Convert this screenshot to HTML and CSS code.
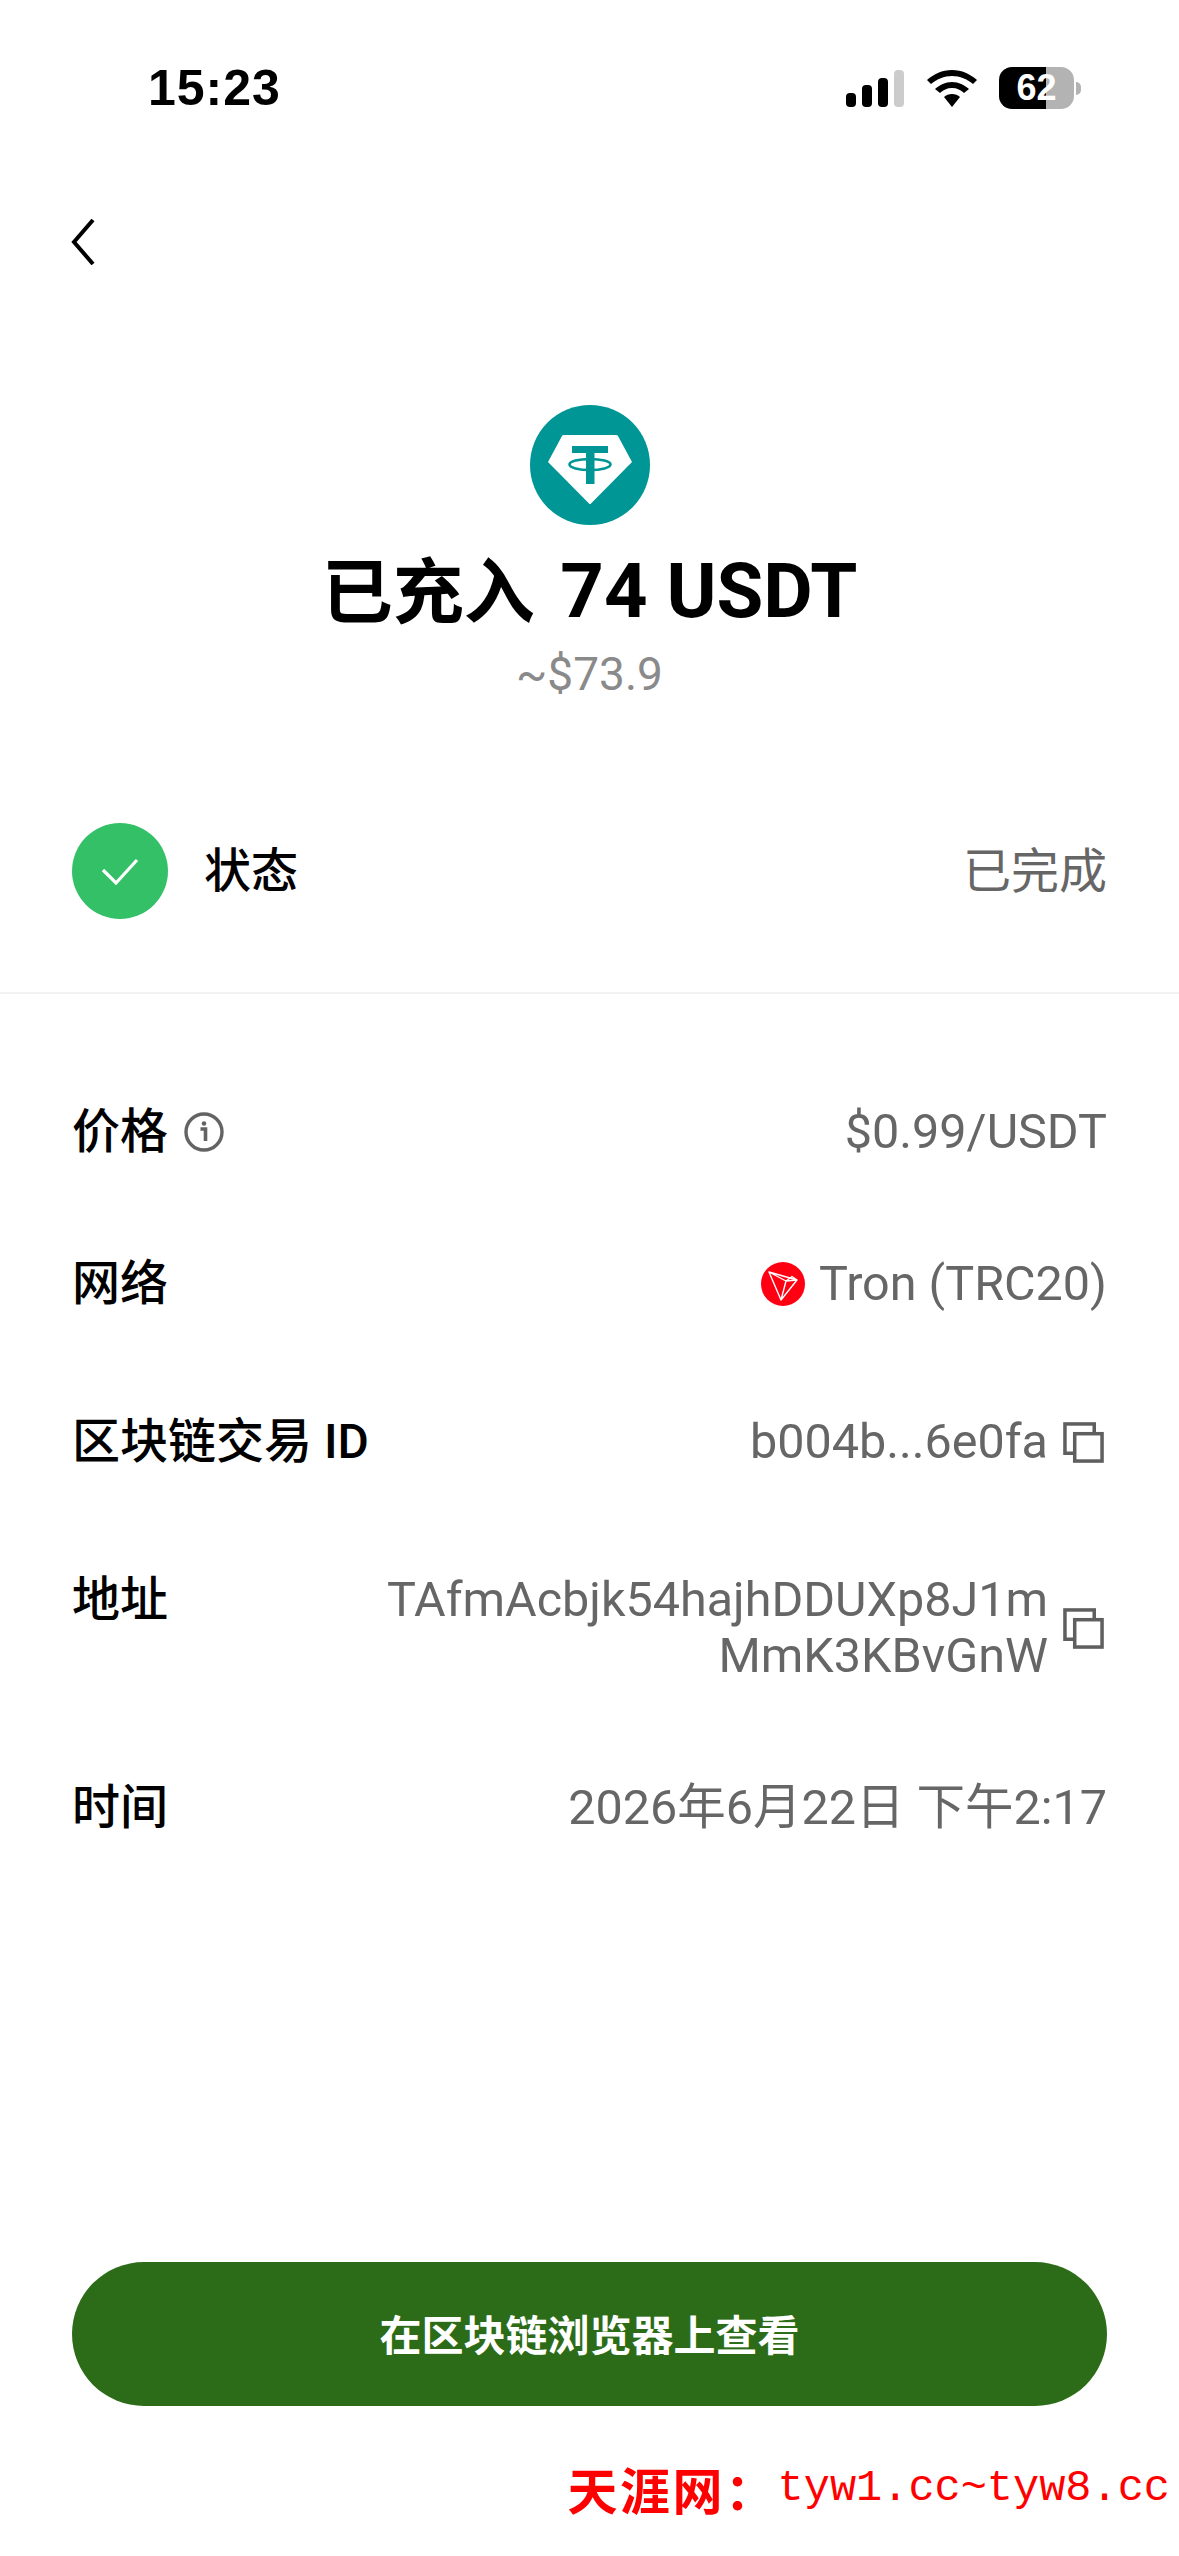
FILE: index.html
```html
<!DOCTYPE html>
<html lang="zh-CN">
<head>
    <meta charset="UTF-8">
    <meta name="viewport" content="width=device-width, initial-scale=1.0">
    <title>已充入 74 USDT</title>
    <link rel="stylesheet" href="styles.css">
</head>
<body>
    <div class="page">
        <div class="status-bar">
            <span class="clock">15:23</span>
            <div class="status-icons">
                <svg class="signal" width="58" height="37" viewBox="0 0 58 37">
                    <rect x="0" y="23" width="10" height="14" rx="4" fill="#000"/>
                    <rect x="16" y="15" width="10" height="22" rx="4" fill="#000"/>
                    <rect x="32" y="8" width="10" height="29" rx="4" fill="#000"/>
                    <rect x="48" y="0" width="10" height="37" rx="4" fill="#ccc"/>
                </svg>
                <svg class="wifi" width="50" height="37" viewBox="0 0 50 37">
                    <path d="M25 0C15 0 7 4 0 10L4 14C10 9 17 6 25 6S40 9 46 14L50 10C43 4 35 0 25 0Z" fill="#000"/>
                    <path d="M25 12C18 12 13 15 8 19L13 23C16 20 20 18 25 18S34 20 37 23L42 19C37 15 32 12 25 12Z" fill="#000"/>
                    <path d="M25 24C22 24 19 25 17 27L25 37L33 27C31 25 28 24 25 24Z" fill="#000"/>
                </svg>
                <div class="battery"><span>62</span></div>
                <div class="battery-tip"></div>
            </div>
        </div>

        <div class="nav">
            <svg width="24" height="46" viewBox="0 0 24 46">
                <path d="M22 1L3 23L22 45" fill="none" stroke="#000" stroke-width="4"/>
            </svg>
        </div>

        <div class="hero">
            <svg class="coin" width="120" height="120" viewBox="0 0 120 120">
                <circle cx="60" cy="60" r="60" fill="#009695"/>
                <path d="M34 30H86Q87.500 30 88 31L102 57L61 98.500Q60 99.500 59 98.500L18 57L32 31Q32.500 30 34 30Z" fill="#fff"/>
                <rect x="42" y="41" width="36" height="7" fill="#009695"/>
                <rect x="56" y="41" width="8.500" height="38" fill="#009695"/>
                <ellipse cx="60" cy="59.500" rx="20.500" ry="5.500" fill="none" stroke="#009695" stroke-width="2.600"/>
            </svg>
            <h1 class="title">已充入 <span class="title-num">74 USDT</span></h1>
            <p class="approx">~$73.9</p>
        </div>

        <div class="state-row">
            <svg class="state-icon" width="96" height="96" viewBox="0 0 96 96">
                <circle cx="48" cy="48" r="48" fill="#34c067"/>
                <path d="M31 47L44 60L65 37" fill="none" stroke="#fff" stroke-width="3.200"/>
            </svg>
            <span class="state-label">状态</span>
            <span class="state-value">已完成</span>
        </div>

        <div class="details">
            <div class="row">
                <div class="label">价格
                    <svg class="info" width="40" height="40" viewBox="0 0 40 40">
                        <circle cx="20" cy="20" r="18" fill="none" stroke="#636363" stroke-width="3.400"/>
                        <circle cx="20" cy="11.500" r="2.300" fill="#636363"/>
                        <path d="M16.500 17H21.500V29" fill="none" stroke="#636363" stroke-width="3.600"/>
                    </svg>
                </div>
                <div class="value">$0.99/USDT</div>
            </div>
            <div class="row">
                <div class="label">网络</div>
                <div class="value">
                    <svg class="tron" width="44" height="44" viewBox="0 0 44 44">
                        <circle cx="22" cy="22" r="22" fill="#ff0013"/>
                        <path d="M8 10L36 18L20 38L8 10L25 19L20 38M25 19L36 18M25 19L31 14.500L36 18" fill="none" stroke="#fff" stroke-width="1.400" stroke-linejoin="round"/>
                    </svg>
                    Tron (TRC20)
                </div>
            </div>
            <div class="row row-copy">
                <div class="label">区块链交易 ID</div>
                <div class="value">b004b...6e0fa
                    <svg class="copy" width="41" height="41" viewBox="0 0 42 42">
                        <rect x="2" y="2" width="30" height="30" fill="#fff" stroke="#5f5f5f" stroke-width="3.600"/>
                        <rect x="12" y="12" width="28" height="28" fill="#fff" stroke="#5f5f5f" stroke-width="3.600"/>
                    </svg>
                </div>
            </div>
            <div class="row row-top row-copy">
                <div class="label">地址</div>
                <div class="value">
                    <div class="addr">TAfmAcbjk54hajhDDUXp8J1m<br>MmK3KBvGnW</div>
                    <svg class="copy" width="41" height="41" viewBox="0 0 42 42">
                        <rect x="2" y="2" width="30" height="30" fill="#fff" stroke="#5f5f5f" stroke-width="3.600"/>
                        <rect x="12" y="12" width="28" height="28" fill="#fff" stroke="#5f5f5f" stroke-width="3.600"/>
                    </svg>
                </div>
            </div>
            <div class="row">
                <div class="label">时间</div>
                <div class="value">2026年6月22日 下午2:17</div>
            </div>
        </div>

        <button class="chain-btn" type="button">在区块链浏览器上查看</button>

        <div class="watermark"><span class="wm-name">天涯网：</span><span class="wm-url">tyw1.cc~tyw8.cc</span></div>
    </div>
</body>
</html>
```

FILE: styles.css
```css
body {
    margin: 0;
    padding: 0;
    background-color: white;
    font-family: Roboto, "Noto Sans CJK SC", sans-serif;
}
.page {
    height: 2556px;
    overflow: hidden;
    display: flex;
    flex-direction: column;
}
.status-bar {
    display: flex;
    justify-content: space-between;
    align-items: center;
    height: 42px;
    margin-top: 67px;
    padding: 0 98px 0 148px;
}
.clock {
    font-family: "Liberation Sans", sans-serif;
    font-size: 50px;
    font-weight: 700;
    letter-spacing: 1px;
    color: #000;
}
.status-icons {
    display: flex;
    align-items: center;
}
.wifi {
    margin-left: 23px;
}
.battery {
    width: 75px;
    height: 42px;
    margin-left: 22px;
    border-radius: 13px;
    background: linear-gradient(90deg, #000 63%, #b3b3b3 63%);
    display: flex;
    justify-content: center;
    align-items: center;
    color: white;
    font-family: "Liberation Sans", sans-serif;
    font-size: 36px;
    font-weight: 700;
}
.battery-tip {
    width: 5px;
    height: 13px;
    margin-left: 2px;
    border-radius: 0 7px 7px 0;
    background-color: #b3b3b3;
}
.nav {
    height: 46px;
    margin-top: 110px;
    padding-left: 71px;
}
.hero {
    display: flex;
    flex-direction: column;
    align-items: center;
    margin-top: 140px;
}
.coin {
    display: block;
}
.title {
    margin: 20px 0 0;
    font-size: 71px;
    line-height: 92px;
    font-weight: 700;
    color: #000;
}
.title-num {
    margin-left: 8px;
    font-size: 76px;
}
.approx {
    margin: 7px 0 0;
    font-size: 46px;
    line-height: 56px;
    font-weight: 400;
    color: #8a8a8a;
}
.state-row {
    display: flex;
    align-items: center;
    margin-top: 121px;
    padding: 0 72px;
    padding-bottom: 73px;
    border-bottom: 2px solid #f2f2f2;
}
.state-label {
    margin-left: 36px;
    margin-bottom: 9px;
    font-size: 47px;
    font-weight: 500;
    color: #000;
}
.state-value {
    margin-left: auto;
    margin-bottom: 9px;
    font-size: 48px;
    font-weight: 400;
    color: #666;
}
.details {
    display: flex;
    flex-direction: column;
    gap: 96px;
    margin-top: 110px;
    padding: 0 72px;
}
.row {
    display: flex;
    justify-content: space-between;
    align-items: center;
    line-height: 56px;
}
.row-top {
    align-items: flex-start;
}
.row-copy {
    margin-top: 6px;
}
.label {
    display: flex;
    align-items: center;
    font-size: 48px;
    font-weight: 500;
    color: #000;
}
.info {
    margin-left: 16px;
}
.value {
    display: flex;
    align-items: center;
    font-size: 48.500px;
    font-weight: 400;
    color: #666;
}
.addr {
    text-align: right;
}
.tron {
    margin-right: 14px;
}
.copy {
    margin-left: 15px;
    margin-right: 3px;
}
.chain-btn {
    display: block;
    margin: auto 72px 0;
    height: 144px;
    padding-bottom: 4px;
    border: none;
    border-radius: 72px;
    background-color: #2c6c18;
    color: white;
    font-family: inherit;
    font-size: 42px;
    font-weight: 700;
}
.watermark {
    display: flex;
    align-items: center;
    justify-content: flex-end;
    height: 70px;
    margin-top: 47px;
    margin-bottom: 33px;
    padding-right: 9px;
    color: #ff0000;
}
.wm-name {
    font-size: 50px;
    font-weight: 700;
    letter-spacing: 2.500px;
}
.wm-url {
    font-family: "Liberation Mono", monospace;
    font-size: 43.600px;
}
```
